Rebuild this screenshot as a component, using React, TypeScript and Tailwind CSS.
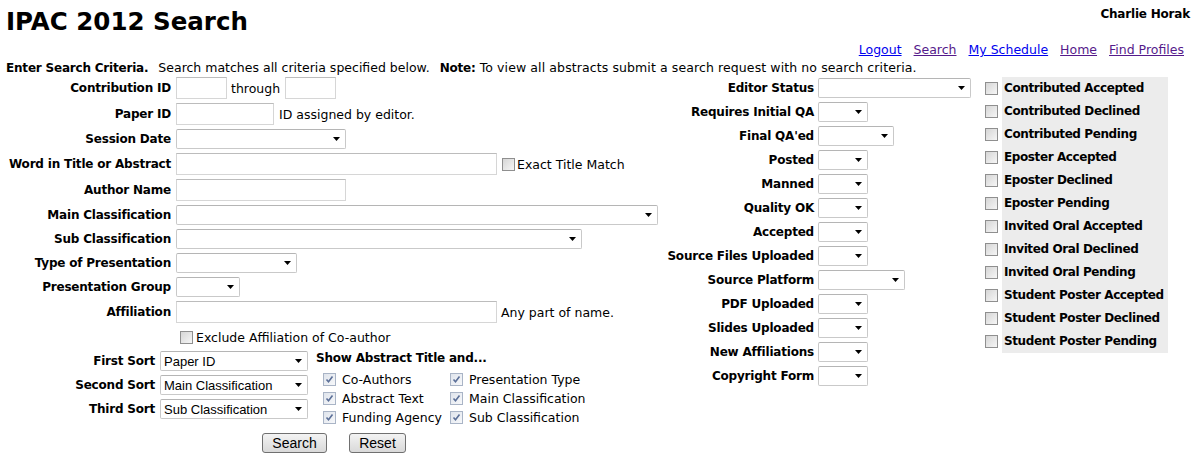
import React from "react";

const sans = "font-['DejaVu_Sans',sans-serif]";
const arial = "font-['Liberation_Sans',Arial,sans-serif]";

function Select({ width, height = 20, value }: { width: number; height?: number; value?: string }) {
  return (
    <div
      className={`relative flex items-center rounded-[2px] border border-[#c9c9c9] border-t-[#b5b5b5] bg-white pl-[3px] ${arial} text-[13px] leading-none text-black`}
      style={{ width, height }}
    >
      {value ? <span>{value}</span> : null}
      <svg className="absolute right-[5px] top-1/2 -translate-y-1/2" width="7" height="4" viewBox="0 0 7 4">
        <polygon points="0,0 7,0 3.5,4" fill="#000" />
      </svg>
    </div>
  );
}

function TextBox({ width }: { width: number }) {
  return (
    <div
      className="h-[22px] border border-[#d6d6d6] border-t-[#bcbcbc] bg-white"
      style={{ width }}
    />
  );
}

function Check({ checked = false }: { checked?: boolean }) {
  if (checked) {
    return (
      <span className="relative block h-[13px] w-[13px] shrink-0 border border-[#a9b4c6] bg-gradient-to-br from-[#dfe4ec] to-[#f7f8fa]">
        <svg className="absolute left-[1px] top-[1px]" width="9" height="9" viewBox="0 0 9 9">
          <polyline points="1.5,4.5 3.5,6.8 7.5,1.5" fill="none" stroke="#5b6f98" strokeWidth="1.6" />
        </svg>
      </span>
    );
  }
  return (
    <span className="block h-[13px] w-[13px] shrink-0 border border-[#8f8f8f] bg-gradient-to-br from-[#d6d6d6] to-[#f6f6f6]" />
  );
}

const bold = "text-[12px] font-bold tracking-[-0.2px] leading-[15px]";

const middleRows: { label: string; width: number }[] = [
  { label: "Editor Status", width: 153 },
  { label: "Requires Initial QA", width: 50 },
  { label: "Final QA'ed", width: 76 },
  { label: "Posted", width: 50 },
  { label: "Manned", width: 50 },
  { label: "Quality OK", width: 50 },
  { label: "Accepted", width: 50 },
  { label: "Source Files Uploaded", width: 50 },
  { label: "Source Platform", width: 87 },
  { label: "PDF Uploaded", width: 50 },
  { label: "Slides Uploaded", width: 50 },
  { label: "New Affiliations", width: 50 },
  { label: "Copyright Form", width: 50 },
];

const statusRows = [
  "Contributed Accepted",
  "Contributed Declined",
  "Contributed Pending",
  "Eposter Accepted",
  "Eposter Declined",
  "Eposter Pending",
  "Invited Oral Accepted",
  "Invited Oral Declined",
  "Invited Oral Pending",
  "Student Poster Accepted",
  "Student Poster Declined",
  "Student Poster Pending",
];

function Row({ label, height, children }: { label: string; height: number; children?: React.ReactNode }) {
  return (
    <div className="flex items-center" style={{ height }}>
      <div className={`w-[171px] shrink-0 text-right ${bold}`}>{label}</div>
      <div className="ml-[5px] flex items-center">{children}</div>
    </div>
  );
}

function Button({ label, width }: { label: string; width: number }) {
  return (
    <div
      className={`flex h-[20px] items-center justify-center rounded-[3px] border border-[#707070] bg-gradient-to-b from-[#f3f3f3] to-[#d9d9d9] ${arial} text-[14px] leading-none text-black`}
      style={{ width }}
    >
      {label}
    </div>
  );
}

export default function App() {
  return (
    <div className={`h-[459px] w-[1201px] overflow-hidden bg-white ${sans} text-[12.5px] leading-[15px] text-black`}>
      <div className="flex justify-between">
        <h1 className="pl-[6px] pt-[8px] text-[24.5px] font-bold leading-[28px]">IPAC 2012 Search</h1>
        <div className="flex flex-col items-end pt-[7px]">
          <div className={`pr-[11px] ${bold}`}>Charlie Horak</div>
          <div className="mt-[20px] flex gap-[12px] pr-[17px] leading-[16px]">
            <span className="text-[#0000ee] underline">Logout</span>
            <span className="text-[#551a8b] underline">Search</span>
            <span className="text-[#0000ee] underline">My Schedule</span>
            <span className="text-[#551a8b] underline">Home</span>
            <span className="text-[#551a8b] underline">Find Profiles</span>
          </div>
        </div>
      </div>

      <div className="mt-[2px] h-[15px] whitespace-nowrap pl-[6px]">
        <span className={bold}>Enter Search Criteria.</span>
        <span className="ml-[10px]">Search matches all criteria specified below.</span>
        <span className={`ml-[10px] ${bold}`}>Note:</span>
        <span className="tracking-[0.1px]"> To view all abstracts submit a search request with no search criteria.</span>
      </div>

      <div className="flex">
        {/* left column */}
        <div className="w-[660px] shrink-0">
          <Row label="Contribution ID" height={26}>
            <TextBox width={51} />
            <span className="ml-[4px] mr-[5px]">through</span>
            <TextBox width={51} />
          </Row>
          <Row label="Paper ID" height={26}>
            <TextBox width={98} />
            <span className="ml-[5px]">ID assigned by editor.</span>
          </Row>
          <Row label="Session Date" height={24}>
            <Select width={170} />
          </Row>
          <Row label="Word in Title or Abstract" height={26}>
            <TextBox width={321} />
            <span className="ml-[5px]">
              <Check />
            </span>
            <span className="ml-[2px]">Exact Title Match</span>
          </Row>
          <Row label="Author Name" height={26}>
            <TextBox width={170} />
          </Row>
          <Row label="Main Classification" height={24}>
            <Select width={482} />
          </Row>
          <Row label="Sub Classification" height={24}>
            <Select width={406} />
          </Row>
          <Row label="Type of Presentation" height={24}>
            <Select width={121} />
          </Row>
          <Row label="Presentation Group" height={24}>
            <Select width={64} />
          </Row>
          <Row label="Affiliation" height={26}>
            <TextBox width={321} />
            <span className="ml-[4px]">Any part of name.</span>
          </Row>
          <div className="flex h-[24px] items-center pl-[180px]">
            <Check />
            <span className="ml-[3px]">Exclude Affiliation of Co-author</span>
          </div>

          <div className="flex">
            <div>
              {[
                ["First Sort", "Paper ID"],
                ["Second Sort", "Main Classification"],
                ["Third Sort", "Sub Classification"],
              ].map(([label, value]) => (
                <div key={label} className="flex h-[24px] items-center">
                  <div className={`w-[155px] text-right ${bold}`}>{label}</div>
                  <div className="ml-[5px]">
                    <Select width={148} value={value} />
                  </div>
                </div>
              ))}
            </div>
            <div className="ml-[8px] pt-[2px]">
              <div className={bold}>Show Abstract Title and...</div>
              <div className="mt-[4px] grid grid-cols-[127px_auto] pl-[7px]">
                {[
                  ["Co-Authors", "Presentation Type"],
                  ["Abstract Text", "Main Classification"],
                  ["Funding Agency", "Sub Classification"],
                ].map(([a, b]) => (
                  <React.Fragment key={a}>
                    <div className="flex h-[19px] items-center">
                      <Check checked />
                      <span className="ml-[6px]">{a}</span>
                    </div>
                    <div className="flex h-[19px] items-center">
                      <Check checked />
                      <span className="ml-[6px]">{b}</span>
                    </div>
                  </React.Fragment>
                ))}
              </div>
            </div>
          </div>

          <div className="mt-[6px] flex gap-[22px] pl-[262px]">
            <Button label="Search" width={65} />
            <Button label="Reset" width={57} />
          </div>
        </div>

        {/* middle column */}
        <div className="mt-[1px] w-[320px] shrink-0">
          {middleRows.map((r) => (
            <div key={r.label} className="flex h-[24px] items-center">
              <div className={`w-[154px] shrink-0 text-right ${bold}`}>{r.label}</div>
              <div className="ml-[4px]">
                <Select width={r.width} />
              </div>
            </div>
          ))}
        </div>

        {/* right column */}
        <div className="mt-[2px]">
          {statusRows.map((s) => (
            <div key={s} className="flex h-[23px]">
              <div className="flex w-[22px] items-center pl-[5px]">
                <Check />
              </div>
              <div className="flex w-[166px] items-center whitespace-nowrap bg-[#ececec] pl-[2px] text-[12px] font-bold tracking-[-0.4px]">
                {s}
              </div>
            </div>
          ))}
        </div>
      </div>
    </div>
  );
}
